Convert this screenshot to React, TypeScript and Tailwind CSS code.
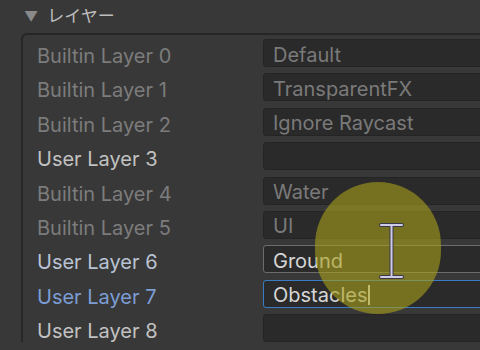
import React from "react";

type Row = {
  label: string;
  value: string;
  kind: "builtin" | "user" | "hover" | "active";
};

const rows: Row[] = [
  { label: "Builtin Layer 0", value: "Default", kind: "builtin" },
  { label: "Builtin Layer 1", value: "TransparentFX", kind: "builtin" },
  { label: "Builtin Layer 2", value: "Ignore Raycast", kind: "builtin" },
  { label: "User Layer 3", value: "", kind: "user" },
  { label: "Builtin Layer 4", value: "Water", kind: "builtin" },
  { label: "Builtin Layer 5", value: "UI", kind: "builtin" },
  { label: "User Layer 6", value: "Ground", kind: "hover" },
  { label: "User Layer 7", value: "Obstacles", kind: "active" },
  { label: "User Layer 8", value: "", kind: "user" },
];

const labelColor = {
  builtin: "text-[#7c7c7c]",
  user: "text-[#c2c2c2]",
  hover: "text-[#b9c3d4]",
  active: "text-[#7c9dd4]",
};

const fieldStyle = {
  builtin: "border-[#242424] text-[#7a7a7a]",
  user: "border-[#242424] text-[#d0d0d0]",
  hover: "border-[#6c6c6c] text-[#d6d6d6]",
  active: "border-[#3b7bc4] text-[#d6d6d6]",
};

export default function App() {
  return (
    <div
      className="relative w-[480px] h-[350px] overflow-hidden bg-[#383838]"
      style={{ fontFamily: "Inter, 'Noto Sans CJK JP', sans-serif" }}
    >
      {/* Foldout header */}
      <div className="flex items-center h-[33px] pl-[24px] gap-[9px]">
        <span className="text-[14px] text-[#8a8a8a] leading-none">▼</span>
        <span className="text-[17px] text-[#bdbdbd] leading-none">レイヤー</span>
      </div>

      {/* Layers panel */}
      <div className="w-[520px] ml-[21px] border-l-2 border-t-2 border-[#262626] rounded-tl-[6px] pt-[4px] flex flex-col gap-[6.4px]">
        {rows.map((r) => (
          <div key={r.label} className="flex items-center h-[28px]">
            <div className={`w-[240px] shrink-0 pl-[14px] text-[20px] leading-none pt-[6px] ${labelColor[r.kind]}`}>
              {r.label}
            </div>
            <div
              className={`flex items-center shrink-0 h-[28px] w-[240px] border rounded-[3px] bg-[#2a2a2a] pl-[9px] text-[20px] leading-none pt-[3px] ${fieldStyle[r.kind]}`}
            >
              {r.value}
              {r.kind === "active" && <span className="ml-[1px] w-[1.5px] h-[20px] bg-[#e0e0e0]" />}
            </div>
          </div>
        ))}
      </div>

      {/* Click highlight */}
      <div className="absolute left-[315px] top-[182px] w-[126px] h-[132px] rounded-full bg-[rgba(170,160,28,0.6)]" />

      {/* I-beam cursor */}
      <svg className="absolute left-[378px] top-[222px]" width="27" height="58" viewBox="0 0 27 58">
        <g stroke="#3a3a4a" strokeWidth="4" strokeLinecap="round">
          <path d="M3 3h21M13.5 3v52M3 55h21" />
        </g>
        <g stroke="#cfcbe6" strokeWidth="2" strokeLinecap="round">
          <path d="M3 3h21M13.5 3v52M3 55h21" />
        </g>
      </svg>
    </div>
  );
}
